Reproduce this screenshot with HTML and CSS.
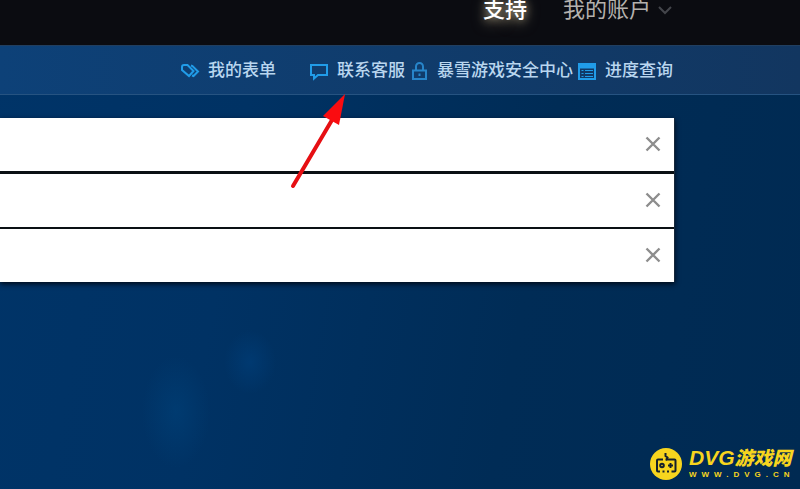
FILE: index.html
```html
<!DOCTYPE html>
<html lang="zh-CN">
<head>
<meta charset="utf-8">
<title>支持</title>
<meta name="viewport" content="width=device-width, initial-scale=1">
<link rel="stylesheet" href="styles.css">
</head>
<body>
<header class="topbar">
  <nav class="topnav">
    <a class="toplink active" href="#">支持</a>
    <button class="toplink account" type="button">我的账户
      <svg class="chevron" viewBox="0 0 14 10" aria-hidden="true"><path d="M1 2l6 6 6-6"/></svg>
    </button>
  </nav>
</header>
<nav class="subnav">
  <a class="sublink spaced" href="#">
    <svg class="icon" viewBox="0 0 20 20" aria-hidden="true"><path class="thick" d="M2 6Q2 4 4 4H7.500L13.500 10 9 15 2 9Z"/><path class="thick" d="M11 4.500 12.500 5 18 10.500 13.500 15 12 14.500"/></svg>
    <span>我的表单</span>
  </a>
  <a class="sublink" href="#">
    <svg class="icon" viewBox="0 0 20 20" aria-hidden="true"><path class="thick" d="M2 4H18V14H9L5 17.500V14H2Z"/></svg>
    <span>联系客服</span>
  </a>
  <a class="sublink" href="#">
    <svg class="icon" viewBox="0 0 20 20" aria-hidden="true"><path class="lock" d="M4 9.500H17V18H4ZM7 9.500V5.500a3.500 3.500 0 0 1 7 0V9.500M10.500 12.500v2.500"/></svg>
    <span>暴雪游戏安全中心</span>
  </a>
  <a class="sublink" href="#">
    <svg class="icon" viewBox="0 0 20 20" aria-hidden="true"><path class="thick" d="M2 3H18V18H2Z"/><path class="solid" d="M2 3H18V7H2Z"/><path d="M4.500 9.500h2M8 9.500h8M4.500 12.500h2M8 12.500h8M4.500 15.500h2M8 15.500h8"/></svg>
    <span>进度查询</span>
  </a>
</nav>
<main class="content">
  <section class="notices">
    <div class="notice first"><button class="close" type="button" aria-label="关闭"><svg viewBox="0 0 16 16"><path d="M1.500 1.500l13 13M14.500 1.500l-13 13"/></svg></button></div>
    <div class="notice"><button class="close" type="button" aria-label="关闭"><svg viewBox="0 0 16 16"><path d="M1.500 1.500l13 13M14.500 1.500l-13 13"/></svg></button></div>
    <div class="notice"><button class="close" type="button" aria-label="关闭"><svg viewBox="0 0 16 16"><path d="M1.500 1.500l13 13M14.500 1.500l-13 13"/></svg></button></div>
  </section>
</main>
<svg class="arrow" viewBox="0 0 60 100" aria-hidden="true"><path class="shaft" d="M5 93L44 27"/><path class="head" d="M57 1L35 23L51 32Z"/></svg>
<a class="brand" href="#">
  <svg class="badge" viewBox="0 0 32 32" aria-hidden="true"><circle cx="16" cy="16" r="16"/><path d="M15.500 5v3l2 1.500-1.500 3M13 11.500H8Q7 11.500 7 12.500V22.500Q7 23.500 8 23.500H10M12.500 23.500h2M17 23.500h2M21.500 23.500H24.500Q25.500 23.500 25.500 22.500V12.500Q25.500 11.500 24.500 11.500H15.500M20.500 15v5M18 17.500h5"/><circle class="stick" cx="12" cy="17.500" r="1.800"/></svg>
  <span class="brandtext">
    <span class="name">DVG<span class="han">游戏网</span></span>
    <span class="site">WWW.DVG.CN</span>
  </span>
</a>
</body>
</html>
```
FILE: styles.css
```css
* { box-sizing: border-box; }
body {
  margin: 0;
  min-height: 100vh;
  position: relative;
  overflow-x: hidden;
  font-family: "Liberation Sans", "Noto Sans CJK SC", sans-serif;
  background:
    radial-gradient(ellipse 34px 56px at 176px 412px, rgba(0, 75, 135, .35), transparent),
    radial-gradient(ellipse 26px 32px at 250px 362px, rgba(0, 70, 135, .4), transparent),
    linear-gradient(100deg, #003468 0%, #003264 30%, #002c56 65%, #002a52 100%);
}
a { color: inherit; text-decoration: none; }
button {
  padding: 0;
  border: 0;
  background: none;
  color: inherit;
  font: inherit;
}
svg { display: block; flex: none; fill: none; }
.topbar {
  height: 45px;
  padding-right: 128px;
  background: #0b0c11;
  color: #b4b1ad;
  font-size: 22px;
  line-height: 20px;
}
.topnav { display: flex; justify-content: flex-end; gap: 36px; }
.toplink { display: flex; align-items: center; gap: 7px; line-height: 20px; }
.active {
  color: #fff;
  font-weight: 500;
  text-shadow: 0 0 8px #a79d83, 0 3px 14px #81785f;
}
.chevron { width: 14px; height: 10px; stroke: #44464b; stroke-width: 2; }
.subnav {
  display: flex;
  align-items: center;
  justify-content: flex-end;
  gap: 4px;
  height: 50px;
  padding: 1px 127px 0 0;
  border-top: 1px solid #213f60;
  border-bottom: 1px solid #265381;
  background: linear-gradient(90deg, #0d4178, #103c6c 50%, #123660);
  color: #b9d6ef;
  font-size: 17px;
  font-weight: 500;
  line-height: 24px;
}
.sublink { display: flex; align-items: center; gap: 8px; white-space: nowrap; }
.spaced { margin-right: 29px; }
.icon { width: 20px; height: 20px; stroke: #219ce8; stroke-width: 1; }
.thick { stroke-width: 2; }
.lock { stroke: #2785ca; stroke-width: 2; }
.solid { fill: #219ce8; }
.content { padding: 23px 125px 0 0; }
.notices {
  background: #0a1014;
  border-right: 1px solid #17283a;
  box-shadow: 0 2px 5px #000a18;
}
.notice {
  display: flex;
  align-items: center;
  justify-content: flex-end;
  height: 53px;
  padding: 0 13px 2px 0;
  margin-bottom: 2px;
  background: #fff;
}
.first { margin-bottom: 3px; }
.notice:last-child { margin-bottom: 0; }
.close { width: 16px; height: 16px; }
.close svg { width: 16px; height: 16px; stroke: #8d8d8d; stroke-width: 2.4; }
.arrow {
  position: absolute;
  top: 93px;
  left: 288px;
  width: 60px;
  height: 100px;
}
.shaft { stroke: #e60f13; stroke-width: 4; stroke-linecap: round; }
.head { fill: #fa0c10; }
.brand {
  position: absolute;
  right: 8px;
  bottom: 9px;
  display: flex;
  align-items: center;
  gap: 7px;
  color: #f7d51e;
}
.badge { width: 32px; height: 32px; fill: #f7d51e; }
.badge path { fill: none; stroke: #14202c; stroke-width: 2; }
.badge .stick { fill: none; stroke: #14202c; stroke-width: 2; }
.brandtext { display: flex; flex-direction: column; width: 103px; }
.name {
  font-size: 21px;
  font-weight: 900;
  font-style: italic;
  line-height: 22px;
  white-space: nowrap;
}
.han { font-size: 19px; }
.site {
  font-size: 8px;
  font-weight: 700;
  line-height: 10px;
  letter-spacing: 5px;
  white-space: nowrap;
}
```
